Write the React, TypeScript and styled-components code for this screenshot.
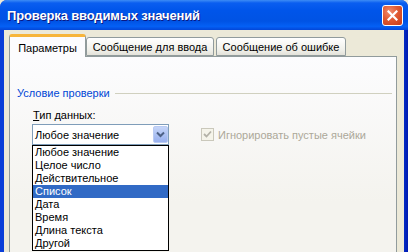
import styled, { createGlobalStyle } from 'styled-components';

const GlobalStyle = createGlobalStyle`
  html, body {
    margin: 0;
    padding: 0;
    background: #ece9d8;
  }
  body {
    font-family: "Liberation Sans", Arial, sans-serif;
    font-size: 11px;
  }
`;

const dataTypes = [
  'Любое значение',
  'Целое число',
  'Действительное',
  'Список',
  'Дата',
  'Время',
  'Длина текста',
  'Другой',
];

const selectedType = 'Список';

function App() {
  return (
    <Viewport>
      <GlobalStyle />
      <Window>
        <TitleBar>
          <Title>Проверка вводимых значений</Title>
          <CloseButton>
            <svg width="11" height="11" viewBox="0 0 11 11">
              <path d="M1.5 1.5 L9.5 9.5 M9.5 1.5 L1.5 9.5" stroke="#fff" strokeWidth="2.2" strokeLinecap="square" />
            </svg>
          </CloseButton>
        </TitleBar>
        <Body>
          <TabStrip>
            <Tab $active $width={77}>Параметры</Tab>
            <Tab $width={128}>Сообщение для ввода</Tab>
            <Tab $width={130} $gap={2}>Сообщение об ошибке</Tab>
          </TabStrip>
          <Panel>
            <SectionHeader>
              <Legend>Условие проверки</Legend>
              <Rule />
            </SectionHeader>
            <Row>
              <Field>
                <Label>
                  <u>Т</u>ип данных:
                </Label>
                <Combo>
                  <ComboText>Любое значение</ComboText>
                  <ArrowButton>
                    <svg width="9" height="7" viewBox="0 0 9 7">
                      <path d="M1 1.5 L4.5 5 L8 1.5" fill="none" stroke="#4d6185" strokeWidth="2" />
                    </svg>
                  </ArrowButton>
                  <DropList>
                    {dataTypes.map((t) => (
                      <ListItem key={t} $selected={t === selectedType}>
                        {t}
                      </ListItem>
                    ))}
                  </DropList>
                </Combo>
              </Field>
              <CheckOption>
                <CheckBox>
                  <svg width="9" height="9" viewBox="0 0 9 9">
                    <path d="M1 4 L3.5 6.5 L8 1.5" fill="none" stroke="#b4b2a8" strokeWidth="1.8" />
                  </svg>
                </CheckBox>
                <CheckLabel>Игнорировать пустые ячейки</CheckLabel>
              </CheckOption>
            </Row>
          </Panel>
        </Body>
      </Window>
    </Viewport>
  );
}

const Viewport = styled.div`
  width: 408px;
  height: 252px;
  overflow: hidden;
`;

const Window = styled.div`
  display: flex;
  flex-direction: column;
  width: 408px;
  height: 300px;
  background: linear-gradient(to right, #0a3ed8 0px, #0a3ed8 400px, #0019b0 408px);
  border-radius: 7px 7px 0 0;
`;

const TitleBar = styled.div`
  height: 30px;
  display: flex;
  align-items: center;
  justify-content: space-between;
  padding: 0 5px 0 7px;
  border-radius: 7px 7px 0 0;
  background: linear-gradient(
    to bottom,
    #3d8cf5 0%,
    #0a5ef0 10%,
    #0055ea 35%,
    #0053e4 70%,
    #0460f5 88%,
    #0346d8 100%
  );
`;

const Title = styled.div`
  color: #fff;
  font-weight: bold;
  font-size: 13px;
  letter-spacing: -0.15px;
  text-shadow: 1px 1px #0a1883;
`;

const CloseButton = styled.div`
  width: 19px;
  height: 19px;
  margin-top: 1px;
  display: flex;
  align-items: center;
  justify-content: center;
  border: 1px solid #fff;
  border-radius: 3px;
  background: radial-gradient(circle at 35% 30%, #f08d70 0%, #e05a32 45%, #c63a18 100%);
`;

const Body = styled.div`
  flex: 1;
  display: flex;
  flex-direction: column;
  margin: 0 4px;
  padding: 4px 7px 0 5px;
  background: #ece9d8;
`;

const TabStrip = styled.div`
  display: flex;
  align-items: flex-end;
  height: 23px;
  margin-bottom: -1px;
  position: relative;
  z-index: 1;
`;

const Tab = styled.div<{ $active?: boolean; $width: number; $gap?: number }>`
  box-sizing: border-box;
  width: ${(p) => p.$width}px;
  margin-left: ${(p) => p.$gap ?? 0}px;
  height: ${(p) => (p.$active ? 23 : 19)}px;
  margin-bottom: ${(p) => (p.$active ? 0 : 1)}px;
  display: flex;
  align-items: center;
  justify-content: center;
  padding-top: ${(p) => (p.$active ? 1 : 0)}px;
  color: #000;
  border: 1px solid #919b9c;
  border-bottom: ${(p) => (p.$active ? 'none' : '1px solid #919b9c')};
  border-top: ${(p) => (p.$active ? '3px solid #f7b53a' : '1px solid #919b9c')};
  border-radius: 3px 3px 0 0;
  background: ${(p) => (p.$active ? '#fcfcfe' : 'linear-gradient(to bottom, #ffffff, #f0f0ea 70%, #e3e2da)')};
`;

const Panel = styled.div`
  flex: 1;
  display: flex;
  flex-direction: column;
  border: 1px solid #919b9c;
  background: linear-gradient(to bottom, #fcfcfe, #f4f3ee 60%);
`;

const SectionHeader = styled.div`
  display: flex;
  align-items: center;
  margin: 30px 4px 0 7px;
  height: 13px;
`;

const Legend = styled.span`
  color: #0046d5;
  line-height: 13px;
`;

const Rule = styled.div`
  flex: 1;
  height: 1px;
  margin-left: 5px;
  background: #d0d0bf;
`;

const Row = styled.div`
  display: flex;
  align-items: flex-start;
  margin: 9px 0 0 22px;
`;

const Field = styled.div`
  display: flex;
  flex-direction: column;
  width: 137px;
`;

const Label = styled.div`
  line-height: 13px;
  padding-left: 1px;
  color: #000;
`;

const Combo = styled.div`
  position: relative;
  box-sizing: border-box;
  width: 137px;
  height: 21px;
  margin-top: 2px;
  display: flex;
  align-items: center;
  border: 1px solid #7f9db9;
  background: #fff;
`;

const ComboText = styled.span`
  flex: 1;
  padding-left: 2px;
  color: #000;
`;

const ArrowButton = styled.div`
  box-sizing: border-box;
  width: 15px;
  height: 17px;
  display: flex;
  align-items: center;
  justify-content: center;
  border: 1px solid #b9cbf3;
  border-radius: 2px;
  background: linear-gradient(to bottom, #c6d5f8, #a9bff2 60%, #98b0ee);
`;

const DropList = styled.div`
  position: absolute;
  top: 20px;
  left: -1px;
  box-sizing: border-box;
  width: 137px;
  border: 1px solid #000;
  background: #fff;
  z-index: 2;
`;

const ListItem = styled.div<{ $selected?: boolean }>`
  height: 13px;
  line-height: 13px;
  padding-left: 2px;
  color: ${(p) => (p.$selected ? '#fff' : '#000')};
  background: ${(p) => (p.$selected ? '#316ac5' : 'transparent')};
`;

const CheckOption = styled.div`
  display: flex;
  align-items: center;
  margin: 19px 0 0 32px;
`;

const CheckBox = styled.div`
  box-sizing: border-box;
  width: 13px;
  height: 13px;
  display: flex;
  align-items: center;
  justify-content: center;
  border: 1px solid #cac8bb;
  background: #f5f4ea;
`;

const CheckLabel = styled.span`
  margin-left: 4px;
  color: #aca899;
`;

export default App;
